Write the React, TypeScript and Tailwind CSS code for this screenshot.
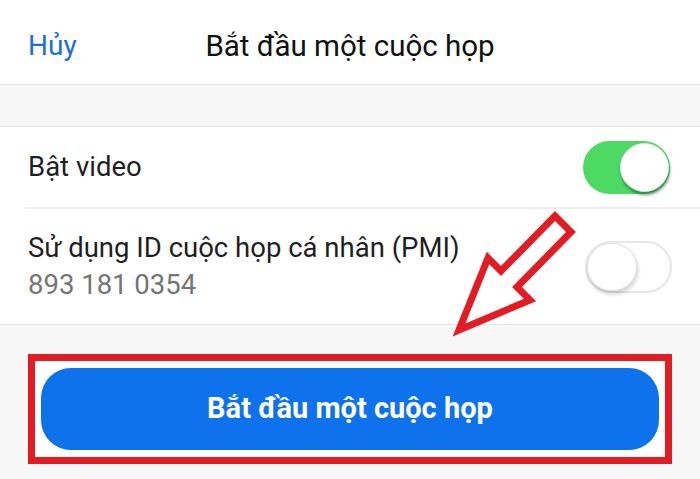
function Toggle({ on }: { on: boolean }) {
  return on ? (
    <div className="flex h-[53px] w-[87px] items-center justify-end rounded-full bg-[#4cd964] pr-[1px]">
      <div className="h-[49px] w-[49px] rounded-full border border-[#e8e8e8] bg-white shadow-[1px_3px_3px_rgba(20,90,40,0.6)]" />
    </div>
  ) : (
    <div className="flex h-[52px] w-[87px] items-center justify-start rounded-full border-2 border-[#e6e6e6] bg-white">
      <div className="h-[48px] w-[50px] rounded-full border border-[#e2e2e2] bg-white shadow-[1px_3px_4px_rgba(0,0,0,0.18)]" />
    </div>
  );
}

export default function App() {
  return (
    <div className="relative h-[479px] w-[700px] overflow-hidden bg-[#f7f7f7] font-['Roboto',sans-serif] text-[#1f1f1f]">
      <header className="grid h-[85px] grid-cols-[1fr_auto_1fr] items-center border-b border-[#e6e6e6] bg-white px-[28px] pt-[8px]">
        <span className="text-[28px] text-[#1d6fd6]">Hủy</span>
        <h1 className="text-[29.5px] text-[#111]">Bắt đầu một cuộc họp</h1>
        <span />
      </header>

      <div className="h-[41px]" />

      <section className="border-y border-[#e6e6e6] bg-white">
        <div className="flex h-[80px] items-center justify-between pl-[28px] pr-[30px]">
          <span className="text-[27.5px]">Bật video</span>
          <Toggle on />
        </div>
        <div className="ml-[25px] border-t-2 border-[#eeeeee]" />
        <div className="flex h-[115px] items-center justify-between pl-[28px] pr-[28px]">
          <div className="flex flex-col gap-[3px]">
            <span className="text-[27.5px] leading-[34px]">Sử dụng ID cuộc họp cá nhân (PMI)</span>
            <span className="text-[27.5px] leading-[34px] text-[#757575]">893 181 0354</span>
          </div>
          <Toggle on={false} />
        </div>
      </section>

      <div className="pl-[28px] pr-[28px] pt-[29px]">
        <div className="border-[7px] border-[#e31b23] bg-white px-[6px] pb-[7px] pt-[7px]">
          <button className="flex h-[82px] w-full items-center justify-center rounded-[30px] bg-[#0e72ed] text-[29px] font-bold text-white">
            Bắt đầu một cuộc họp
          </button>
        </div>
      </div>

      <svg className="absolute left-0 top-0" width="700" height="479" viewBox="0 0 700 479">
        <polygon
          points="555,216 571,232 517,287 530,300 459,330 488,258 501,271"
          fill="white"
          stroke="#e31b23"
          strokeWidth="7"
          strokeLinejoin="miter"
        />
      </svg>
    </div>
  );
}
